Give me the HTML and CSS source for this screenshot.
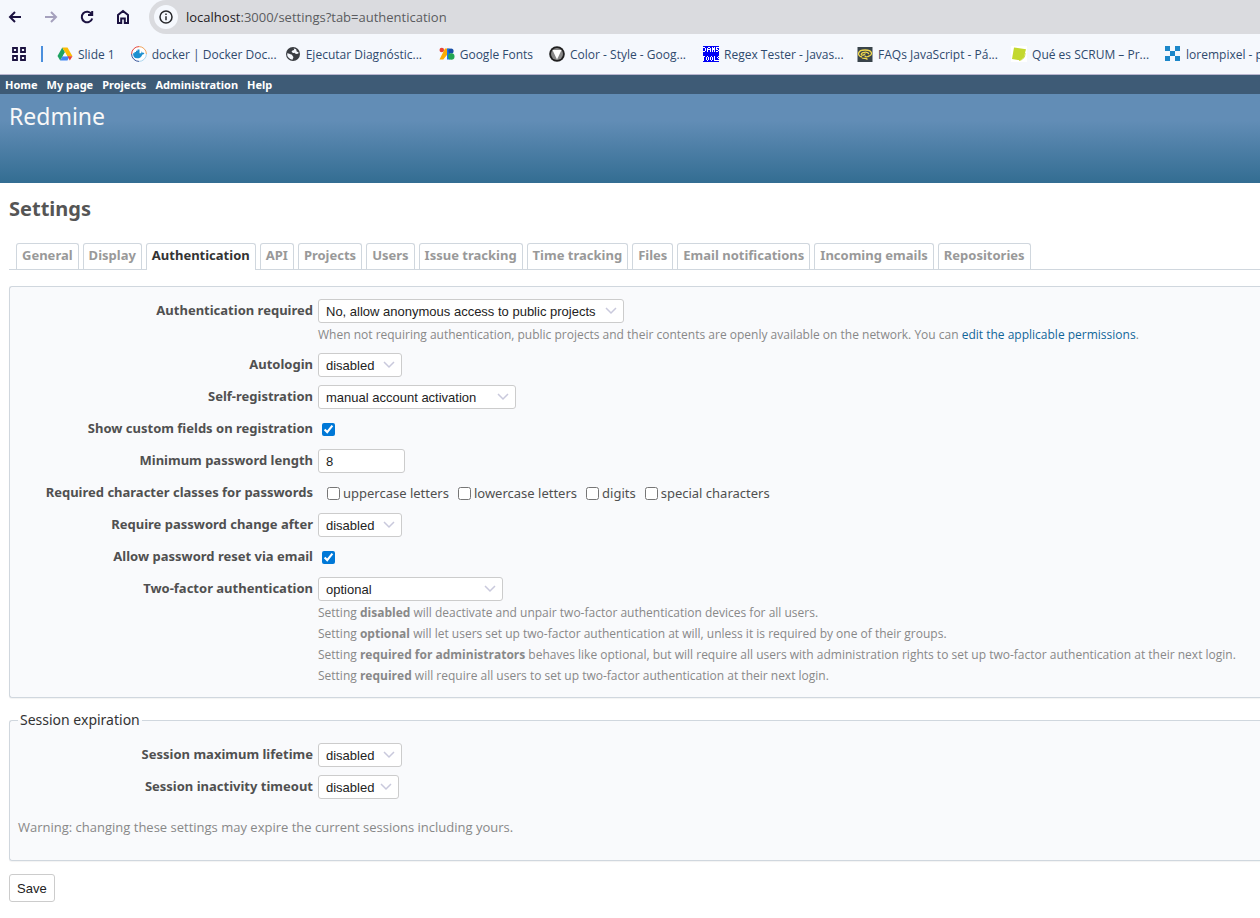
FILE: index.html
```html
<!DOCTYPE html>
<html lang="en">
<head>
  <meta charset="UTF-8">
  <title>Settings - Redmine</title>
  <meta name="viewport" content="width=device-width, initial-scale=1.0">
  <link rel="stylesheet" href="styles.css">
</head>
<body>

<div class="browser">
  <div class="toolbar">
    <button class="nav" aria-label="Back"><svg width="16" height="16" viewBox="0 0 16 16"><path d="M14 8H3M8 3L3 8l5 5"/></svg></button>
    <button class="nav disabled" aria-label="Forward"><svg width="16" height="16" viewBox="0 0 16 16"><path d="M2 8h11M8 3l5 5-5 5"/></svg></button>
    <button class="nav" aria-label="Reload"><svg width="16" height="16" viewBox="0 0 16 16"><path d="M12.6 5.2A5.3 5.3 0 1 0 13.2 9.4M13.2 2v4H9"/></svg></button>
    <button class="nav" aria-label="Home page"><svg width="16" height="16" viewBox="0 0 16 16"><path d="M3 14V6l5-4 5 4v8H9.800V9.500H6.200V14z"/></svg></button>
    <div class="address">
      <button class="info" aria-label="Site information"><svg width="14" height="14" viewBox="0 0 14 14"><circle cx="7" cy="7" r="6"/><path d="M7 6.200v4M7 3.600v1.400"/></svg></button>
      <span class="url"><b>localhost</b>:3000/settings?tab=authentication</span>
    </div>
  </div>
  <div class="bookmarks">
    <button class="apps" aria-label="Tab groups"><svg width="16" height="16" viewBox="0 0 16 16"><path d="M2 2h4v4H2zM10 2h4v4h-4zM2 10h4v4H2zM10 10h4v4h-4z"/></svg></button>
    <span class="separator"></span>
    <a class="bookmark" href="#">
      <svg width="16" height="16" viewBox="0 0 16 16"><path fill="#1ea362" d="M5.300 1.500L8 6.200 3.200 14.500.5 10z"/><path fill="#fbbc04" d="M5.300 1.500h5.200l5 8.700h-5.200z"/><path fill="#4285f4" d="M5.600 10.200h6.800L10.500 14.500H3.200z"/><path fill="#ea4335" d="M10.600 10.200h4.900l-2.700 4.300z"/><path fill="#f5f8fd" d="M8 6.200l2.300 4H5.700z"/></svg>
      <span>Slide 1</span></a>
    <a class="bookmark long" href="#">
      <svg width="16" height="16" viewBox="0 0 16 16"><circle cx="8" cy="8" r="7.500" fill="#fff"/><path d="M8 .6A7.400 7.400 0 0 1 15.400 8" fill="none" stroke="#f0a35c"/><path d="M15.400 8A7.400 7.400 0 0 1 8 15.400" fill="none" stroke="#aad5ee"/><path d="M8 15.400A7.400 7.400 0 0 1 .6 8" fill="none" stroke="#36549a"/><path d="M.6 8A7.400 7.400 0 0 1 8 .6" fill="none" stroke="#e4483f"/><path fill="#1c90d0" d="M2 7.300h1.500V6H5V4.800h1.500V3.500h2v3.800h1.700c.4-.7.300-1.400.1-1.900 1 .3 1.200 1 1.200 1.500.7-.1 1.400 0 1.900.3-.5.900-1.200 1.200-2 1.200-1 2.700-2.700 3.900-5.300 3.900C3.300 12.300 2 10.300 2 7.300z"/></svg>
      <span>docker | Docker Doc...</span></a>
    <a class="bookmark long" href="#">
      <svg width="16" height="16" viewBox="0 0 16 16"><circle cx="8" cy="8" r="7" fill="#3a3d42"/><path fill="#f5f8fd" d="M2.200 7.200c2 0 2.500 1.200 4.300 1.200 1 .4.800 1.500 1.600 2 .8.800-.3 1.900-.6 3.300A5.700 5.700 0 0 1 2.200 7.200zM8.300 2.200c1.200.8 1 1.600 0 2.100-1.200.3-1.900.8-1.500 1.700.6.900 2 .2 2.800.9.800 1 2.200 1.500 3.800.7l.1-1.300-1.800-.8-.6-2.300z"/></svg>
      <span>Ejecutar Diagnóstic...</span></a>
    <a class="bookmark" href="#">
      <svg width="16" height="16" viewBox="0 0 16 16"><circle cx="2.800" cy="4" r="2.300" fill="#ea4335"/><path fill="#fbab05" d="M6 2.500h4v4L4.300 13.500H.5z"/><path fill="#1a73e8" d="M8 2.500h3v11H8z"/><circle cx="12" cy="5" r="2.600" fill="#174ea6"/><circle cx="12.300" cy="10.500" r="3.200" fill="#22a652"/></svg>
      <span>Google Fonts</span></a>
    <a class="bookmark long" href="#">
      <svg width="16" height="16" viewBox="0 0 16 16"><circle cx="8" cy="8" r="7.800" fill="#1f1f1f"/><circle cx="8" cy="8" r="6" fill="#888"/><path fill="#fff" d="M3.500 4h9L8 13.500z"/></svg>
      <span>Color - Style - Goog...</span></a>
    <a class="bookmark long" href="#">
      <svg width="16" height="16" viewBox="0 0 16 16" shape-rendering="crispEdges"><path fill="#0000f5" d="M0 0h16v16H0z"/><path fill="none" stroke="#fff" d="M0 1.500h2M2.500 2v3M0 5.500h2M4.500 6V2M5 1.500h2M7.500 2v4M5 3.500h2M9.500 6V1M10.500 2v2M11.500 1v5M16 1.500h-3M13.500 2v1M13 3.500h2M15.500 4v1M13 5.500h2M0 10.500h2M.5 10v5M3.500 11v3M4 10.500h1M5.500 11v3M4 14.500h1M7.500 11v3M8 10.500h1M9.500 11v3M8 14.500h1M11.500 10v5M12 14.500h2M16 10.500h-1M14.500 11v1M15 12.500h1M14 14.500h2"/></svg>
      <span>Regex Tester - Javas...</span></a>
    <a class="bookmark long" href="#">
      <svg width="16" height="16" viewBox="0 0 16 16"><path fill="#39444a" d="M.5 1h15v15H.5z"/><path fill="none" stroke="#f1d84c" stroke-width="1.300" d="M5 11C-.5 9.500.5 4 8 4s8.500 5 3 6.500C8 11.500 8 10 8 9.500M4.500 9c-2-3 7.500-4 7.300-.8M4.500 9c2 1 3-1.500 4-1M5 12c2 1 4-.5 5.500 1.500"/></svg>
      <span>FAQs JavaScript - Pá...</span></a>
    <a class="bookmark long" href="#">
      <svg width="16" height="16" viewBox="0 0 16 16"><path fill="#fff" d="M0 0h16v16H0z"/><path fill="#c3d82e" d="M3 1.500l12 1.700-2.300 8.300-3.500 2.800L1 13z"/><path fill="none" stroke="#c3d82e" d="M14 7c0 4-2 7-6 7.300"/></svg>
      <span>Qué es SCRUM – Pr...</span></a>
    <a class="bookmark" href="#">
      <svg width="16" height="16" viewBox="0 0 16 16" shape-rendering="crispEdges"><path fill="#1c87c9" d="M0 0h5v5H0zM10 0h5v5h-5zM5 5h5v5H5zM0 10h5v5H0zM10 10h5v5h-5z"/></svg>
      <span>lorempixel - p</span></a>
  </div>
</div>

<div class="top-menu">
  <a href="#">Home</a>
  <a href="#">My page</a>
  <a href="#">Projects</a>
  <a href="#">Administration</a>
  <a href="#">Help</a>
</div>

<div class="header">
  <h1>Redmine</h1>
</div>

<div class="content">
  <h2>Settings</h2>

  <div class="tabs">
    <a href="#">General</a>
    <a href="#">Display</a>
    <a href="#" class="selected">Authentication</a>
    <a href="#">API</a>
    <a href="#">Projects</a>
    <a href="#">Users</a>
    <a href="#">Issue tracking</a>
    <a href="#">Time tracking</a>
    <a href="#">Files</a>
    <a href="#">Email notifications</a>
    <a href="#">Incoming emails</a>
    <a href="#">Repositories</a>
  </div>

  <form>
    <div class="box">
      <div class="row">
        <label class="name" for="login_required">Authentication required</label>
        <select id="login_required" class="w-login">
          <option>Yes</option>
          <option selected>No, allow anonymous access to public projects</option>
        </select>
        <em class="hint">When not requiring authentication, public projects and their contents are openly available on the network. You can <a href="#">edit the applicable permissions</a>.</em>
      </div>
      <div class="row">
        <label class="name" for="autologin">Autologin</label>
        <select id="autologin" class="w-days"><option>disabled</option><option>1 day</option><option>7 days</option></select>
      </div>
      <div class="row">
        <label class="name" for="self_registration">Self-registration</label>
        <select id="self_registration" class="w-registration"><option>manual account activation</option><option>disabled</option></select>
      </div>
      <div class="row">
        <label class="name" for="show_custom_fields">Show custom fields on registration</label>
        <input type="checkbox" id="show_custom_fields" class="single" checked>
      </div>
      <div class="row">
        <label class="name" for="password_min_length">Minimum password length</label>
        <input type="text" id="password_min_length" value="8">
      </div>
      <div class="row" role="group" aria-labelledby="char_classes">
        <span class="name" id="char_classes">Required character classes for passwords</span>
        <div class="checks">
          <label><input type="checkbox">uppercase letters</label>
          <label><input type="checkbox">lowercase letters</label>
          <label><input type="checkbox">digits</label>
          <label><input type="checkbox">special characters</label>
        </div>
      </div>
      <div class="row">
        <label class="name" for="password_max_age">Require password change after</label>
        <select id="password_max_age" class="w-days"><option>disabled</option><option>7 days</option><option>30 days</option></select>
      </div>
      <div class="row">
        <label class="name" for="lost_password">Allow password reset via email</label>
        <input type="checkbox" id="lost_password" class="single" checked>
      </div>
      <div class="row">
        <label class="name" for="twofa">Two-factor authentication</label>
        <select id="twofa" class="w-twofa"><option>optional</option><option>disabled</option><option>required for administrators</option><option>required</option></select>
        <em class="hint">
          Setting <strong>disabled</strong> will deactivate and unpair two-factor authentication devices for all users.<br>
          Setting <strong>optional</strong> will let users set up two-factor authentication at will, unless it is required by one of their groups.<br>
          Setting <strong>required for administrators</strong> behaves like optional, but will require all users with administration rights to set up two-factor authentication at their next login.<br>
          Setting <strong>required</strong> will require all users to set up two-factor authentication at their next login.
        </em>
      </div>
    </div>

    <fieldset class="box session">
      <legend>Session expiration</legend>
      <div class="row">
        <label class="name" for="session_lifetime">Session maximum lifetime</label>
        <select id="session_lifetime" class="w-days"><option>disabled</option><option>1 day</option><option>7 days</option></select>
      </div>
      <div class="row">
        <label class="name" for="session_timeout">Session inactivity timeout</label>
        <select id="session_timeout" class="w-hours"><option>disabled</option><option>1 hour</option><option>2 hours</option></select>
      </div>
      <p class="warning">Warning: changing these settings may expire the current sessions including yours.</p>
    </fieldset>

    <button type="submit" class="save">Save</button>
  </form>
</div>

</body>
</html>
```
FILE: styles.css
```css
* {
  box-sizing: border-box;
}

body {
  margin: 0;
  font-family: "Noto Sans", sans-serif;
  font-size: 13px;
  color: #333;
  background: #fff;
  overflow-x: hidden;
}

a {
  color: #169;
  text-decoration: none;
}

/* browser bar */
.browser {
  background: #f5f8fd;
  border-bottom: 1px solid #b9b6cf;
  font-family: "Open Sans", "Noto Sans", sans-serif;
  overflow: hidden;
}

.browser svg {
  flex-shrink: 0;
}

.browser button {
  display: flex;
  flex-shrink: 0;
  align-items: center;
  justify-content: center;
  padding: 0;
  border: none;
  background: none;
}

.browser button svg {
  fill: none;
  stroke: #1b1240;
  stroke-width: 2;
}

.toolbar {
  display: flex;
  align-items: center;
  gap: 20px;
  height: 34px;
  padding-left: 7px;
}

.toolbar .disabled svg {
  stroke: #a5a1bd;
}

.address {
  display: flex;
  flex: 1;
  align-items: center;
  gap: 8px;
  height: 34px;
  margin-left: -2px;
  padding-left: 5px;
  background: #dadbdf;
  border-radius: 17px 0 0 17px;
}

.address .info {
  width: 24px;
  height: 24px;
  border-radius: 50%;
  background: #f5f8fd;
}

.address .info svg {
  stroke: #27282c;
  stroke-width: 1.5;
}

.url {
  font-size: 13px;
  color: #5a5c60;
}

.url b {
  font-weight: normal;
  color: #1f2023;
}

.bookmarks {
  display: flex;
  align-items: center;
  gap: 16px;
  height: 40px;
  padding-left: 11px;
  white-space: nowrap;
}

.bookmarks .apps svg {
  stroke-width: 1.8;
}

.separator {
  flex-shrink: 0;
  width: 2px;
  height: 16px;
  margin: 0 -2px;
  background: #4a8fdd;
}

.bookmark {
  display: flex;
  flex-shrink: 0;
  align-items: center;
  gap: 5px;
  font-size: 12px;
  color: #2f4a6d;
}

.bookmark.long {
  width: 138px;
}

/* redmine header */
.top-menu {
  display: flex;
  gap: 9px;
  height: 19px;
  padding-left: 5px;
  background: #3e5b76;
  font-size: 11px;
  font-weight: bold;
  line-height: 19px;
}

.top-menu a {
  color: #fff;
}

.header {
  height: 89px;
  padding: 4px 9px;
  background: linear-gradient(#628db6 30%, #336d92);
}

.header h1 {
  margin: 0;
  font-size: 23px;
  font-weight: normal;
  line-height: 36px;
  color: #f8f8f8;
}

.content {
  padding: 10px 0 16px 9px;
}

h2 {
  margin: 0;
  font-size: 20px;
  line-height: 32px;
  color: #555;
}

.tabs {
  display: flex;
  gap: 4px;
  margin-top: 18px;
  padding-left: 7px;
  border-bottom: 1px solid #d0d7de;
}

.tabs a {
  height: 26px;
  padding: 0 5px;
  border: 1px solid #d0d7de;
  border-bottom: none;
  border-radius: 3px 3px 0 0;
  font-size: 13px;
  font-weight: bold;
  line-height: 23px;
  color: #999;
  white-space: nowrap;
}

.tabs .selected {
  height: 27px;
  margin-bottom: -1px;
  background: #fff;
  color: #333;
}

/* the boxes run off the right side of the page */
.box {
  margin: 16px 0 0;
  padding: 12px 0 3px;
  background: #f9fafc;
  border: 1px solid #d0d7de;
  border-right: none;
  border-radius: 3px 0 0 3px;
  box-shadow: 0 1px 1px rgba(0,0,0,0.05);
}

.row {
  display: grid;
  grid-template-columns: 303px 1fr;
  column-gap: 5px;
  align-items: center;
  justify-items: start;
  padding-bottom: 8px;
}

.name {
  justify-self: end;
  height: 24px;
  font-weight: bold;
  line-height: 22px;
  color: #505050;
}

.hint {
  grid-column: 2;
  margin-top: 1px;
  font-family: "Open Sans", "Noto Sans", sans-serif;
  font-size: 12px;
  font-style: normal;
  line-height: 21px;
  color: #888;
  white-space: nowrap;
}

select,
input[type="text"] {
  height: 24px;
  padding: 0 7px;
  border: 1px solid #ccc;
  border-radius: 3px;
  background: #fff;
  font-family: "Liberation Sans", Arial, sans-serif;
  font-size: 13px;
  color: #222;
}

select {
  appearance: none;
  background: #fff url("data:image/svg+xml,%3Csvg xmlns='http://www.w3.org/2000/svg' width='12' height='8'%3E%3Cpath d='M1 1l5 5 5-5' fill='none' stroke='%23c9c9dc' stroke-width='1.500'/%3E%3C/svg%3E") no-repeat right 6px center;
}

input[type="text"] {
  width: 87px;
}

input[type="checkbox"] {
  width: 13px;
  height: 13px;
  margin: 0;
  accent-color: #0078d7;
}

.row .single {
  margin-left: 4px;
}

.w-login { width: 306px; }
.w-days { width: 84px; }
.w-hours { width: 81px; }
.w-registration { width: 198px; }
.w-twofa { width: 185px; }

.checks {
  display: flex;
  gap: 9px;
  padding-left: 9px;
  line-height: 16px;
  color: #505050;
}

.checks label {
  display: flex;
  align-items: center;
  gap: 3px;
}

.session {
  margin-top: 12px;
  padding: 13px 0 23px;
}

.session legend {
  margin-left: 8px;
  padding: 0 2px;
  font-size: 14px;
  line-height: 20px;
}

.warning {
  margin: 10px 0 0 8px;
  font-family: "Open Sans", "Noto Sans", sans-serif;
  line-height: 20px;
  color: #888;
}

.save {
  height: 28px;
  margin-top: 13px;
  padding: 0 7px;
  border: 1px solid #ccc;
  border-radius: 3px;
  background: #fff;
  font-family: "Liberation Sans", Arial, sans-serif;
  font-size: 13px;
  color: #222;
}
```
